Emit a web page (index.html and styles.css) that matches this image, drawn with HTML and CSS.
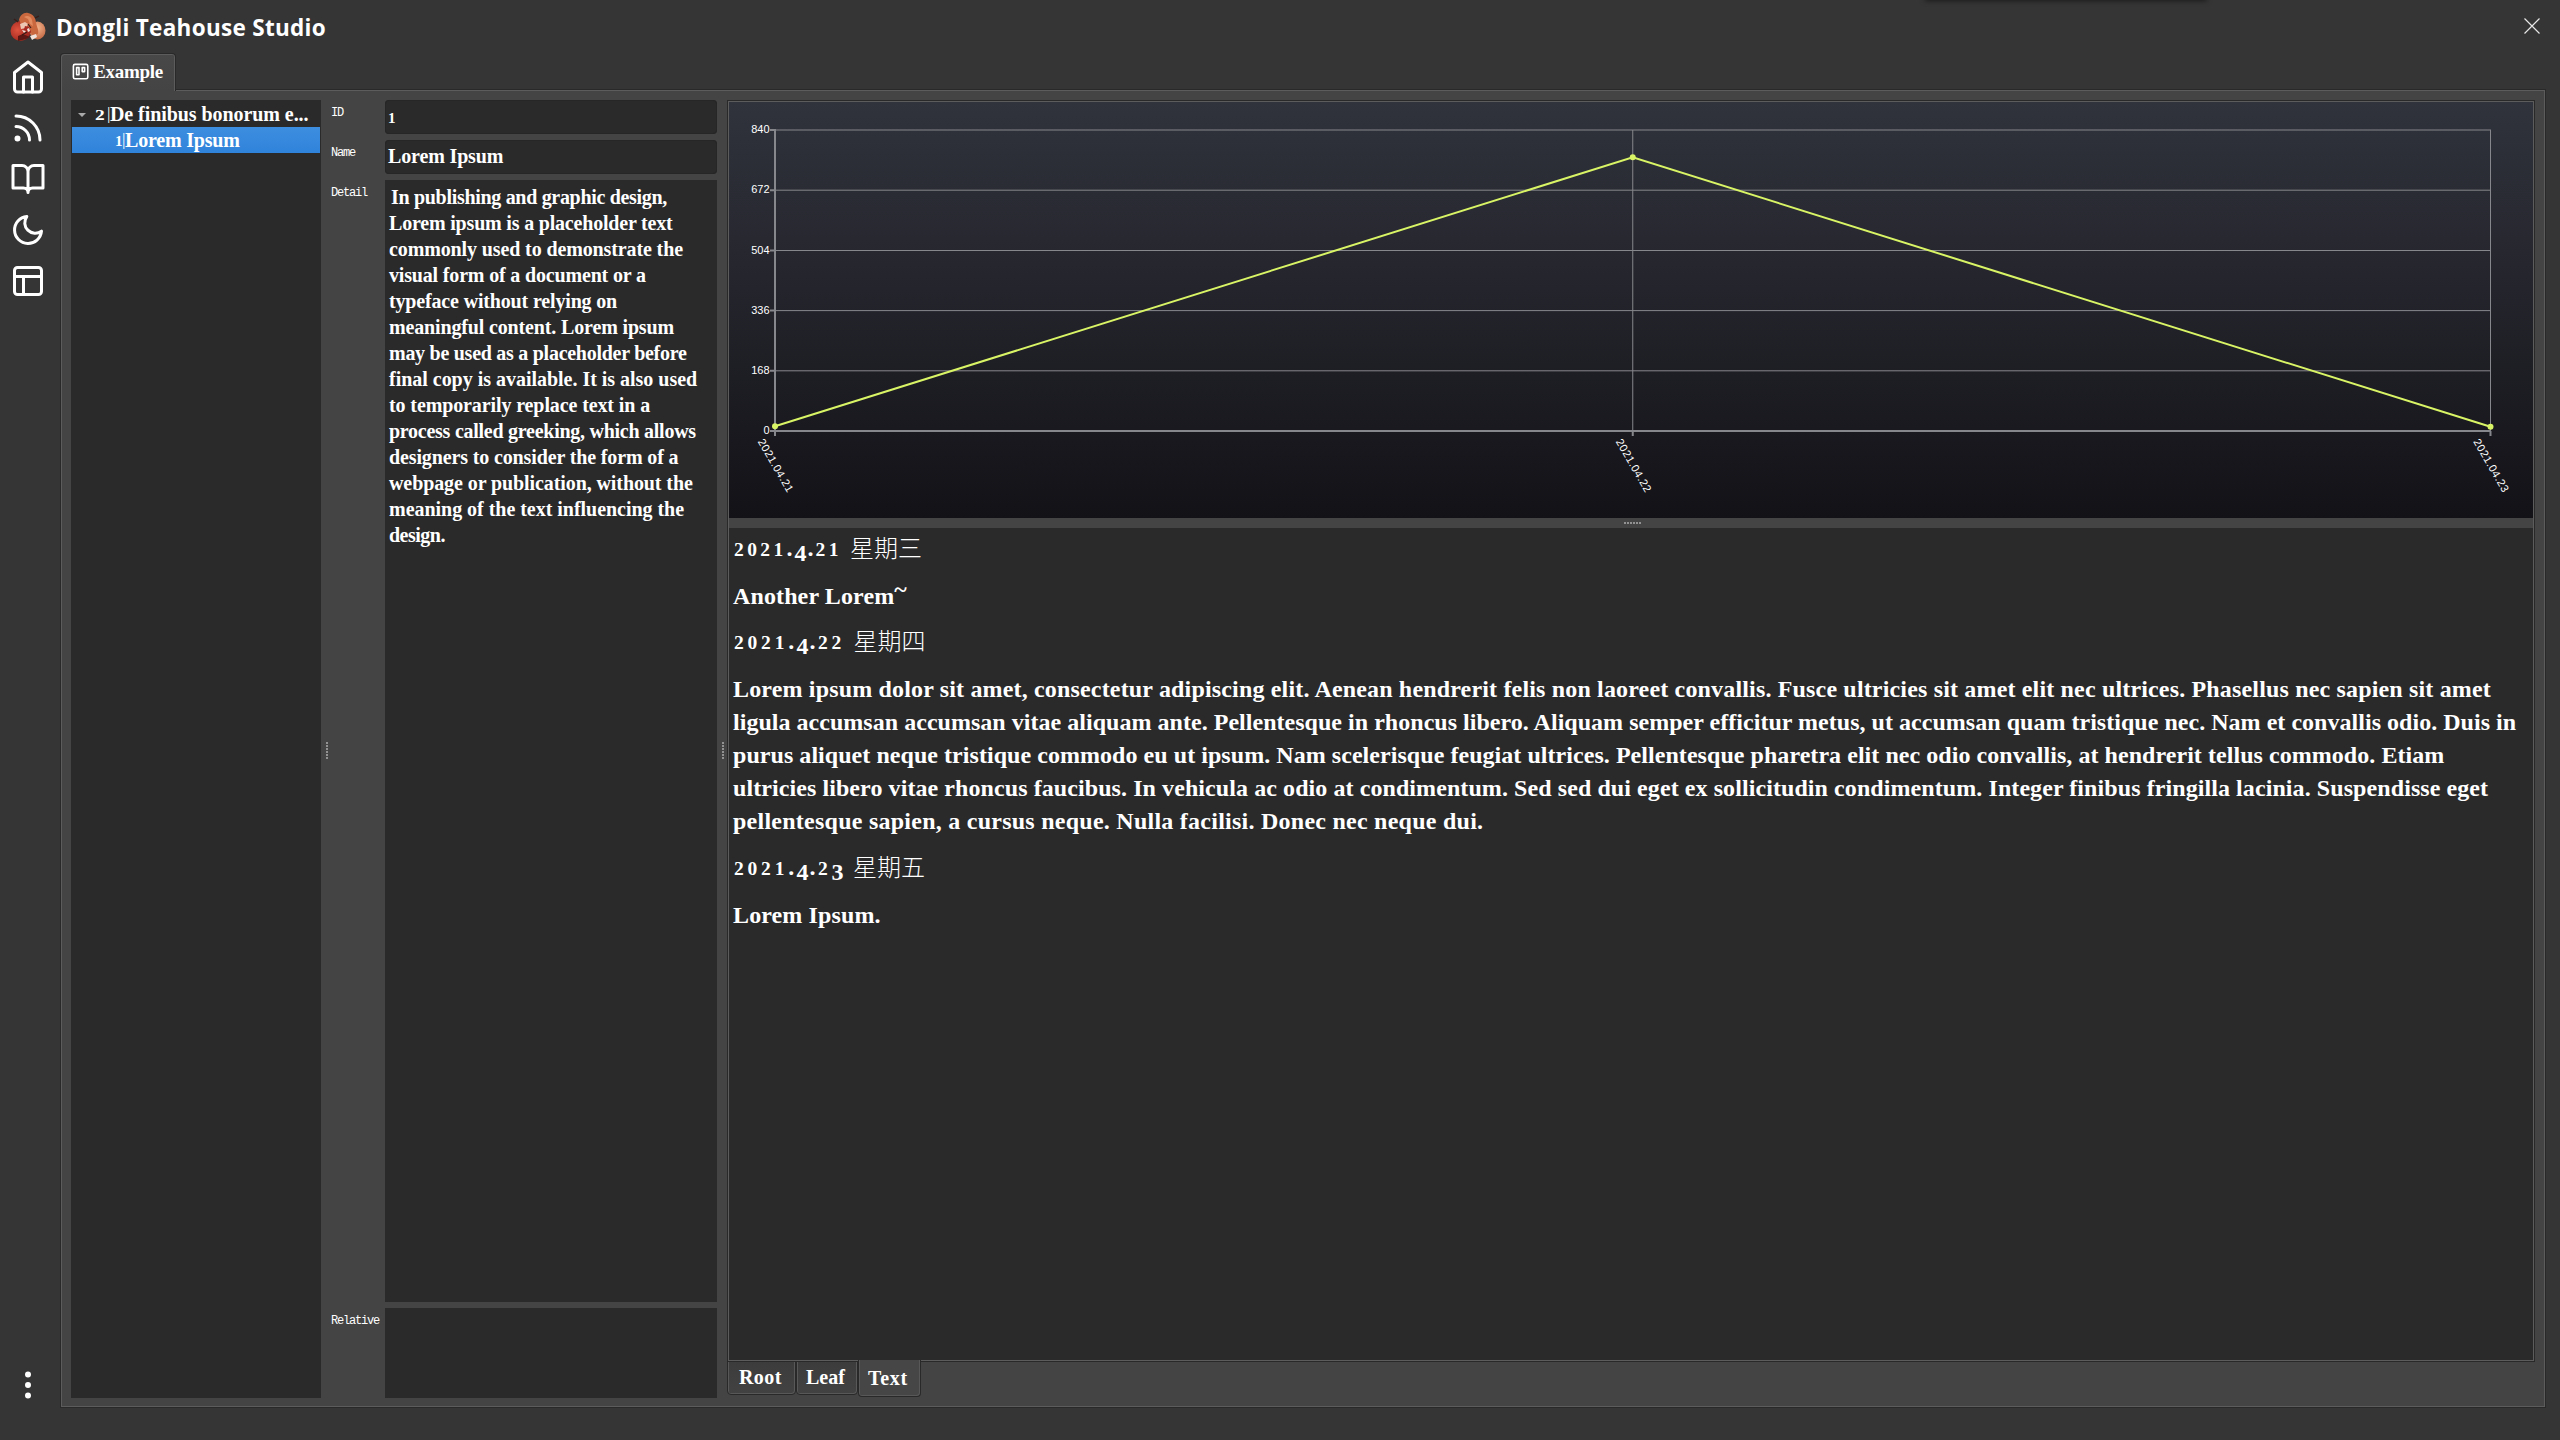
FILE: index.html
```html
<!DOCTYPE html>
<html lang="en">
<head>
<meta charset="utf-8">
<title>Dongli Teahouse Studio</title>
<link rel="stylesheet" href="styles.css">
</head>
<body>
<div class="window">
  <div class="window-shade"></div>
  <header class="titlebar">
    <svg class="logo" viewBox="0 0 36 30">
      <defs>
        <radialGradient id="apple" cx=".35" cy=".45" r=".7"><stop offset="0" stop-color="#e0533e"/><stop offset="1" stop-color="#96201a"/></radialGradient>
        <radialGradient id="peach" cx=".5" cy=".35" r=".7"><stop offset="0" stop-color="#f3b48c"/><stop offset="1" stop-color="#c1643f"/></radialGradient>
      </defs>
      <ellipse cx="27.500" cy="18.500" rx="8" ry="9" fill="url(#peach)"/>
      <circle cx="10.500" cy="19" r="10" fill="url(#apple)"/>
      <path d="M9 8C10 3 14 0 18 1c5 1 8 5 8 10 1 4 3 7 2 11l-5 2-5-9-7-3z" fill="#c9673f"/>
      <path d="M14 5c3-2 7-1 8 3l1 6-3-2-2-5z" fill="#e28a5f"/>
      <path d="M10 12l5-2 3 2-2 4-5 1z" fill="#eec7b2"/>
      <path d="M15 14l4 1 2 5-3 4-5-3z" fill="#a52b22"/>
      <path d="M8 24l5-2 7 3-4 2-8 2z" fill="#5a1714"/>
      <path d="M17 17l2-1 1 3-2 1zM20 24l6-2 1 3-5 3zM12 18l4 1-2 2z" fill="#f0e3dc"/>
      <path d="M4 7l4 3M25 6l4-2M12 23l5-3M18 12l3 4" stroke="#3a1c18" stroke-width="1.200" fill="none"/>
    </svg>
    <h1 class="title">Dongli Teahouse Studio</h1>
    <svg class="close" viewBox="0 0 16 16"><path d="M.5.5l15 15M15.500.5l-15 15"/></svg>
  </header>

  <nav class="sidebar">
    <svg class="icon" viewBox="0 0 24 24"><path d="M3 9l9-7 9 7v11a2 2 0 0 1-2 2H5a2 2 0 0 1-2-2z"/><path d="M9 22V12h6v10"/></svg>
    <svg class="icon" viewBox="0 0 24 24"><path d="M4 11a9 9 0 0 1 9 9M4 4a16 16 0 0 1 16 16"/><circle cx="5" cy="19" r="1"/></svg>
    <svg class="icon" viewBox="0 0 24 24"><path d="M2 3h6a4 4 0 0 1 4 4v14a3 3 0 0 0-3-3H2zM22 3h-6a4 4 0 0 0-4 4v14a3 3 0 0 1 3-3h7z"/></svg>
    <svg class="icon" viewBox="0 0 24 24"><path d="M21 12.790A9 9 0 1 1 11.210 3 7 7 0 0 0 21 12.790z"/></svg>
    <svg class="icon" viewBox="0 0 24 24"><rect x="3" y="3" width="18" height="18" rx="2"/><path d="M3 9h18M9 21V9"/></svg>
    <svg class="icon icon-more" viewBox="0 0 24 24"><circle cx="12" cy="5" r="1"/><circle cx="12" cy="12" r="1"/><circle cx="12" cy="19" r="1"/></svg>
  </nav>

  <main class="workspace">
    <div class="tab">
      <svg class="tab-icon" viewBox="0 0 24 24"><rect x="3" y="3" width="18" height="18" rx="2"/><path d="M7 7h3v9H7zM14 7h3v5h-3z"/></svg>
      <span>Example</span>
    </div>
    <div class="pane">
      <section class="tree">
        <div class="tree-row"><i class="arrow"></i><span class="num">2</span><span class="bar">|</span><span class="tree-name">De finibus bonorum e...</span></div>
        <div class="tree-row tree-child"><span class="num">1</span><span class="bar">|</span><span class="leaf-name">Lorem Ipsum</span></div>
      </section>
      <div class="splitter splitter-v"><i class="grip grip-v"></i></div>
      <section class="form">
        <label class="label">ID</label><div class="field"><span class="num">1</span></div>
        <label class="label">Name</label><div class="field field-name">Lorem Ipsum</div>
        <label class="label">Detail</label>
        <div class="area detail">
          <div>In publishing and graphic design,</div>
          <div>Lorem ipsum is a placeholder text</div>
          <div>commonly used to demonstrate the</div>
          <div>visual form of a document or a</div>
          <div>typeface without relying on</div>
          <div>meaningful content. Lorem ipsum</div>
          <div>may be used as a placeholder before</div>
          <div>final copy is available. It is also used</div>
          <div>to temporarily replace text in a</div>
          <div>process called greeking, which allows</div>
          <div>designers to consider the form of a</div>
          <div>webpage or publication, without the</div>
          <div>meaning of the text influencing the</div>
          <div>design.</div>
        </div>
        <label class="label">Relative</label><div class="area"></div>
      </section>
      <div class="splitter splitter-v splitter-right"><i class="grip grip-v"></i></div>
      <section class="viewer">
        <div class="viewer-pane">
          <svg class="chart" viewBox="729 102 1804 416">
            <g class="grid">
              <path d="M775 130H2491M775 190.200H2491M775 250.500H2491M775 310.600H2491M775 370.800H2491"/>
              <path d="M1632.750 130V431M2490.500 130V431"/>
            </g>
            <path class="axis" d="M775 129V436M770 431H2491M770 130h5M770 190.200h5M770 250.400h5M770 310.600h5M770 370.800h5M1632.750 431v5M2490.500 431v5"/>
            <path class="series" d="M775 426.300L1632.750 157.300L2490.500 426.800"/>
            <g class="points"><circle cx="775" cy="426.300" r="3"/><circle cx="1632.750" cy="157.300" r="3"/><circle cx="2490.500" cy="426.800" r="3"/></g>
            <g class="y-label">
              <text x="769.500" y="133">840</text><text x="769.500" y="193">672</text><text x="769.500" y="254">504</text>
              <text x="769.500" y="314">336</text><text x="769.500" y="374">168</text><text x="769.500" y="434">0</text>
            </g>
            <g class="x-label">
              <text transform="translate(776 465.500) rotate(60)" y="4">2021.04.21</text>
              <text transform="translate(1634 465.500) rotate(60)" y="4">2021.04.22</text>
              <text transform="translate(2491.500 465.500) rotate(60)" y="4">2021.04.23</text>
            </g>
          </svg>
          <div class="splitter splitter-h"><i class="grip grip-h"></i></div>
          <article class="journal">
            <h2 class="date"><span class="os">2021</span>.<span class="od">4</span>.<span class="os">21</span> <span class="week">星期三</span></h2>
            <p class="entry"><span>Another Lorem<span class="tilde">~</span></span></p>
            <h2 class="date date-wide"><span class="os">2021</span>.<span class="od">4</span>.<span class="os">22</span> <span class="week">星期四</span></h2>
            <p class="entry entry-long"><span>Lorem ipsum dolor sit amet, consectetur adipiscing elit. Aenean hendrerit felis non laoreet convallis. Fusce ultricies sit amet elit nec ultrices. Phasellus nec sapien sit amet</span><span>ligula accumsan accumsan vitae aliquam ante. Pellentesque in rhoncus libero. Aliquam semper efficitur metus, ut accumsan quam tristique nec. Nam et convallis odio. Duis in</span><span>purus aliquet neque tristique commodo eu ut ipsum. Nam scelerisque feugiat ultrices. Pellentesque pharetra elit nec odio convallis, at hendrerit tellus commodo. Etiam</span><span>ultricies libero vitae rhoncus faucibus. In vehicula ac odio at condimentum. Sed sed dui eget ex sollicitudin condimentum. Integer finibus fringilla lacinia. Suspendisse eget</span><span>pellentesque sapien, a cursus neque. Nulla facilisi. Donec nec neque dui.</span></p>
            <h2 class="date date-wide"><span class="os">2021</span>.<span class="od">4</span>.<span class="os">2</span><span class="od">3</span> <span class="week">星期五</span></h2>
            <p class="entry"><span>Lorem Ipsum.</span></p>
          </article>
        </div>
        <div class="bottom-tabs">
          <div class="btab">Root</div><div class="btab btab-leaf">Leaf</div><div class="btab btab-active">Text</div>
        </div>
      </section>
    </div>
  </main>
</div>
</body>
</html>
```
FILE: styles.css
```css
* { box-sizing: border-box; }

body {
  margin: 0;
  background: #353535;
  color: #fff;
  font: bold 20px/26px "Liberation Serif", "Noto Sans CJK SC", serif;
}

.window {
  position: relative;
  display: grid;
  grid-template: 53px 1355px / 60px 2486px;
  width: 2560px;
  height: 1440px;
  overflow: hidden;
}

.window-shade {
  position: absolute;
  left: 1926px;
  top: -4px;
  width: 280px;
  height: 4px;
  box-shadow: 0 0 5px 1px rgba(0, 0, 0, .5);
}

/* Title bar */
.titlebar {
  grid-column: 1 / 3;
  display: flex;
  align-items: flex-start;
  padding: 12px 0 0 10px;
}

.logo { width: 36px; height: 30px; margin-right: 10px; }

.title {
  flex: 1;
  margin: 0;
  font: bold 22.5px/32px "Open Sans", sans-serif;
  letter-spacing: .3px;
}

.close {
  width: 16px;
  height: 16px;
  margin: 6px 6px 0 0;
  stroke: #e6e6e6;
  stroke-width: 1.2;
}

/* Sidebar */
.sidebar {
  display: flex;
  flex-direction: column;
  gap: 15px;
  padding: 6px 0 5px 10px;
}

.icon {
  width: 36px;
  height: 36px;
  fill: none;
  stroke: #fff;
  stroke-width: 2;
  stroke-linecap: round;
  stroke-linejoin: round;
}

.icon-more { margin-top: auto; }

/* Workspace tabs */
.workspace { display: flex; flex-direction: column; align-items: flex-start; }

.tab {
  z-index: 1;
  display: flex;
  align-items: center;
  gap: 3px;
  width: 116px;
  height: 38px;
  margin-bottom: -2px;
  padding: 0 0 2px 10px;
  border: 1px solid #292929;
  border-bottom: 0;
  border-radius: 4px 4px 0 0;
  box-shadow: inset 1px 1px #5c5c5c, inset -1px 0 #5c5c5c;
  background: linear-gradient(#484848, #444);
  font-size: 19px;
  letter-spacing: -.3px;
}

.tab-icon {
  width: 19.2px;
  height: 19.2px;
  fill: none;
  stroke: #fff;
  stroke-width: 2;
  stroke-linejoin: round;
}

.pane {
  display: grid;
  grid-template-columns: 250px 14px 382px 10px 1808px;
  width: 2486px;
  height: 1319px;
  padding: 10px 9px 9px 10px;
  border: 1px solid #292929;
  box-shadow: inset 0 0 0 1px #5c5c5c;
  background: #444;
}

/* Tree */
.tree {
  height: 1298px;
  padding: 1px;
  background: #2a2a2a;
}

.tree-row {
  display: flex;
  height: 26px;
  padding-left: 7px;
  line-height: 26px;
}

.tree-child {
  padding-left: 43px;
  background: linear-gradient(#3d8ee0, #2f83da);
  line-height: 26px;
}

.arrow {
  width: 8px;
  height: 4px;
  margin: 12px 9px 0 -1px;
  background: #aaa;
  clip-path: polygon(0 0, 100% 0, 50% 100%);
}

.num { font-size: 15px; letter-spacing: 2px; }
.tree .num { width: 12px; letter-spacing: 0; line-height: 29px; transform: scaleX(1.3); transform-origin: left; }
.tree-child .num { width: 7px; transform: none; line-height: 28px; }
.bar { width: 3px; font-weight: normal; font-size: 17px; }
.tree-name { letter-spacing: -.07px; }
.leaf-name { letter-spacing: -.2px; }

/* Splitters */
.splitter { display: flex; align-items: center; justify-content: center; padding-top: 3px; }
.splitter-v { padding-right: 2px; }
.splitter-right { padding: 3px 0 0 2px; }
.grip-v { width: 2px; height: 17px; background: repeating-linear-gradient(#929292 0 2px, transparent 2px 3px); }
.grip-h { width: 17px; height: 2px; background: repeating-linear-gradient(90deg, #929292 0 2px, transparent 2px 3px); }
.splitter-h { height: 10px; padding: 0 0 0 2px; background: #444; }

/* Form */
.form {
  display: grid;
  grid-template: 34px 34px 1122px 90px / 44px 332px;
  gap: 6px;
  height: 1298px;
}

.label {
  padding-top: 6px;
  margin-left: -4px;
  font: normal 12px/14px "Liberation Mono", monospace;
  letter-spacing: -1.2px;
}

.field {
  padding-left: 3px;
  border-radius: 4px;
  box-shadow: inset 0 0 0 1px #262626;
  background: #2a2a2a;
  line-height: 33px;
  letter-spacing: -.15px;
}

.field .num { line-height: 34px; }
.area { background: #2a2a2a; white-space: nowrap; }
.detail { padding: 4px; }
.detail div:nth-child(1) { padding-left: 2px; letter-spacing: -.31px; }
.detail div:nth-child(2) { letter-spacing: -.19px; }
.detail div:nth-child(3) { letter-spacing: -.12px; }
.detail div:nth-child(4) { letter-spacing: -.17px; }
.detail div:nth-child(5) { letter-spacing: -.16px; }
.detail div:nth-child(6) { letter-spacing: -.15px; }
.detail div:nth-child(7) { letter-spacing: -.27px; }
.detail div:nth-child(8) { letter-spacing: -.02px; }
.detail div:nth-child(9) { letter-spacing: -.11px; }
.detail div:nth-child(10) { letter-spacing: -.26px; }
.detail div:nth-child(11) { letter-spacing: -.13px; }
.detail div:nth-child(12) { letter-spacing: -.09px; }
.detail div:nth-child(13) { letter-spacing: -.03px; }
.detail div:nth-child(14) { letter-spacing: -.5px; }

/* Viewer */
.viewer-pane {
  height: 1262px;
  border: 1px solid #292929;
  padding: 1px;
  box-shadow: inset 0 0 0 1px #5c5c5c;
  background: #2a2a2a;
}

.chart {
  display: block;
  width: 1804px;
  height: 416px;
  background: linear-gradient(#30333c, #24242c 45%, #121217);
}

.grid { fill: none; stroke: #86878c; stroke-width: 1; }
.axis { fill: none; stroke: #86878c; stroke-width: 2; }
.series { fill: none; stroke: #d9f566; stroke-width: 2; }
.points { fill: #d9f566; }
.y-label, .x-label { fill: #fff; font: normal 11px "Liberation Sans", sans-serif; }
.y-label { text-anchor: end; }
.x-label { text-anchor: middle; letter-spacing: .5px; }

.journal { padding: 4px; font-size: 24px; line-height: 33px; white-space: nowrap; }
.date { margin: 0 0 15px; padding-left: 1px; height: 33px; font-size: 24px; letter-spacing: 2px; }
.os { font-size: 19.5px; letter-spacing: 3.4px; }
.date-wide { letter-spacing: 2.4px; }
.date-wide .os { letter-spacing: 3.8px; }
.od { line-height: 0; vertical-align: -5px; letter-spacing: 1px; }
.week { font: 300 24px/0 "Noto Sans CJK SC", sans-serif; letter-spacing: 0; vertical-align: -1px; }
.entry { height: 33px; margin: 0 0 12px; letter-spacing: .12px; }
.entry-long { height: 165px; margin-bottom: 13px; }
.entry-long span { display: block; }
.entry-long span:nth-child(1) { letter-spacing: .165px; }
.entry-long span:nth-child(2) { letter-spacing: .03px; }
.entry-long span:nth-child(3) { letter-spacing: .05px; }
.entry-long span:nth-child(4) { letter-spacing: .08px; }
.entry-long span:nth-child(5) { letter-spacing: .25px; }
.tilde { line-height: 0; vertical-align: 7px; }

/* Bottom tabs */
.bottom-tabs { display: flex; align-items: flex-start; }

.btab {
  width: 69px;
  height: 34px;
  margin-top: -1px;
  padding-left: 11px;
  border: 1px solid #292929;
  border-radius: 0 0 4px 4px;
  box-shadow: inset 1px 0 #585858, inset -1px -1px #585858;
  background: linear-gradient(#3c3c3c, #424242);
  line-height: 31px;
  letter-spacing: .4px;
}

.btab-leaf { width: 62px; padding-left: 9px; letter-spacing: 0; }

.btab-active {
  height: 37px;
  margin-top: -2px;
  width: 63px;
  border-top: 0;
  background: #464646;
  padding-left: 9px;
  line-height: 36px;
  letter-spacing: .7px;
}
```
